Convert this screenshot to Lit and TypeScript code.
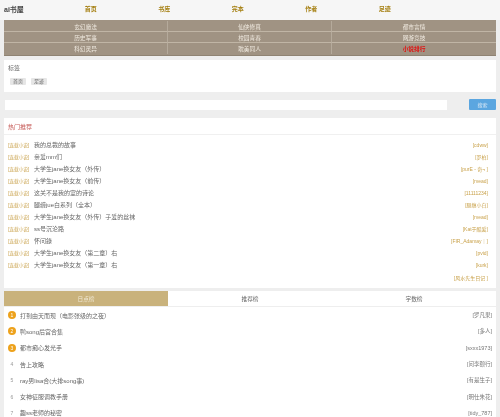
import { LitElement, html, css } from "lit";
import { customElement } from "lit/decorators.js";

const navLinks = ["首页", "书库", "完本", "作者", "足迹"];
const cats = ["玄幻魔法", "仙侠修真", "都市言情", "历史军事", "校园青春", "网游竞技", "科幻灵异", "耽美同人", "小说排行"];
const hot = [
  ["我的总裁的故事", "[cdww]"],
  ["亲爱mm们", "[罗柏]"],
  ["大学生jane换女友（外传）", "[purE - 奇¬ ]"],
  ["大学生jane换女友（前传）", "[rvead]"],
  ["这关不是我的室的诗论", "[11111234]"],
  ["腿缠jue白系列（全本）", "[腿缠小白]"],
  ["大学生jane换女友（外传）子爱的丝袜", "[rvead]"],
  ["ss号沉沦路", "[Kat于酷爱]"],
  ["怀问錄", "[FIR_Adamay｜]"],
  ["大学生jane换女友（第二章）右", "[pvid]"],
  ["大学生jane换女友（第一章）右", "[kurk]"],
];
const rank = [
  ["打到由天而现（电影张级的之夜）", "[罗凡果]"],
  ["鸭song后宫合集", "[多人]"],
  ["都市痴心发光手", "[sxxx1973]"],
  ["告上攻略", "[问李颐行]"],
  ["ray男lisa合(大排song事)", "[有是生子]"],
  ["女神征服调教手册", "[明仕朱花]"],
  ["趣ss老师的秘密", "[tidy_787]"],
];

@customElement("app-root")
export class AppRoot extends LitElement {
  static styles = css`
    :host { display: block; width: 500px; height: 417px; overflow: hidden; background: #eeeeee;
      font-family: "Liberation Sans", "Noto Sans CJK SC", sans-serif; font-size: 6px; color: #555; filter: blur(0.6px); }
    .header { height: 20px; display: grid; grid-template-columns: 50px repeat(5, 73.5px) 1fr; align-items: center;
      padding: 0 4px 3px; background: #f6f6f6; box-sizing: border-box; }
    .logo { font-size: 7px; font-weight: bold; color: #444; }
    .header a { color: #a57f10; font-size: 6px; justify-self: center; font-weight: bold; }
    .nav { margin: 0 4px; padding: 1px 0; background: #a09383; display: grid;
      grid-template-columns: repeat(3, 1fr); grid-auto-rows: 1fr; border-bottom: 1px solid #8f8373; box-sizing: border-box; height: 36px; }
    .nav span { display: flex; align-items: center; justify-content: center; color: #efe9df; font-size: 5.7px;
      border-bottom: 1px solid #c0b5a5; border-right: 1px solid #b5aa9b; }
    .nav span:nth-child(3n) { border-right: none; }
    .nav span:nth-last-child(-n+3) { border-bottom: none; }
    .nav .red { color: #e21010; font-weight: bold; }
    .tags { margin: 4px 4px 0; height: 32px; background: #fff; padding: 5px 4px; box-sizing: border-box; }
    .tags .t { font-size: 6px; color: #666; line-height: 7px; }
    .chips { display: flex; gap: 5px; margin: 6px 0 0 2px; }
    .chips span { background: #e6e6e6; font-size: 5px; color: #666; padding: 1px 3px; border-radius: 1px; line-height: 5px; }
    .search { margin: 7px 4px 0 5px; display: flex; justify-content: space-between; align-items: center; height: 11px; }
    .search .input { width: 442px; height: 10px; background: #fff; }
    .search .btn { width: 27px; height: 11px; background: #5ba6e0; color: #dceaf6; font-size: 5px;
      display: flex; align-items: center; justify-content: center; border-radius: 1px; }
    .hot { margin: 8px 4px 0; height: 169.5px; background: #fff; }
    .hot .title { height: 17px; display: flex; align-items: center; padding-left: 4px; color: #c8605d; font-size: 6px;
      border-bottom: 1px solid #f0f0f0; box-sizing: border-box; margin-bottom: 3.5px; }
    .hrow { display: flex; align-items: center; height: 12.05px; padding: 0 8px 0 4px; }
    .hrow .c { color: #cba552; font-size: 4.7px; width: 26px; flex: none; }
    .hrow .n { flex: 1; color: #666; font-size: 6px; }
    .hrow .a { color: #c9a24c; font-size: 5px; }
    .hot .extra { justify-content: flex-end; }
    .tabs { margin: 3.5px 4px 0; height: 16px; background: #fff; display: grid; grid-template-columns: repeat(3, 1fr);
      border-bottom: 1px solid #eee; box-sizing: border-box; }
    .tabs span { display: flex; align-items: center; justify-content: center; font-size: 5.7px; color: #666; }
    .tabs .on { background: #c9b27c; color: #efe8d4; }
    .rank { margin: 0 4px; background: #fff; height: 111px; }
    .rrow { display: flex; align-items: center; height: 16.3px; padding: 0 4px; }
    .rrow .i { width: 8px; height: 8px; border-radius: 50%; margin-right: 4px; flex: none; display: flex;
      align-items: center; justify-content: center; font-size: 5px; color: #999; }
    .rrow .i.top { background: #eda21c; color: #fff; }
    .rrow .n { flex: 1; color: #666; font-size: 6px; }
    .rrow .a { color: #777; font-size: 5.5px; }
  `;
  render() {
    return html`
      <div class="header"><span class="logo">ai书屋</span>${navLinks.map((l) => html`<a>${l}</a>`)}</div>
      <div class="nav">${cats.map((c, i) => html`<span class=${i === 8 ? "red" : ""}>${c}</span>`)}</div>
      <div class="tags"><div class="t">标签</div><div class="chips"><span>首页</span><span>足迹</span></div></div>
      <div class="search"><div class="input"></div><div class="btn">搜索</div></div>
      <div class="hot">
        <div class="title">热门推荐</div>
        ${hot.map(([n, a]) => html`<div class="hrow"><span class="c">[连载小说]</span><span class="n">${n}</span><span class="a">${a}</span></div>`)}
        <div class="hrow extra"><span class="a">[风水先生日记 ]</span></div>
      </div>
      <div class="tabs"><span class="on">日点榜</span><span>推荐榜</span><span>字数榜</span></div>
      <div class="rank">
        ${rank.map(([n, a], i) => html`<div class="rrow"><span class="i ${i < 3 ? "top" : ""}">${i + 1}</span><span class="n">${n}</span><span class="a">${a}</span></div>`)}
      </div>
    `;
  }
}
